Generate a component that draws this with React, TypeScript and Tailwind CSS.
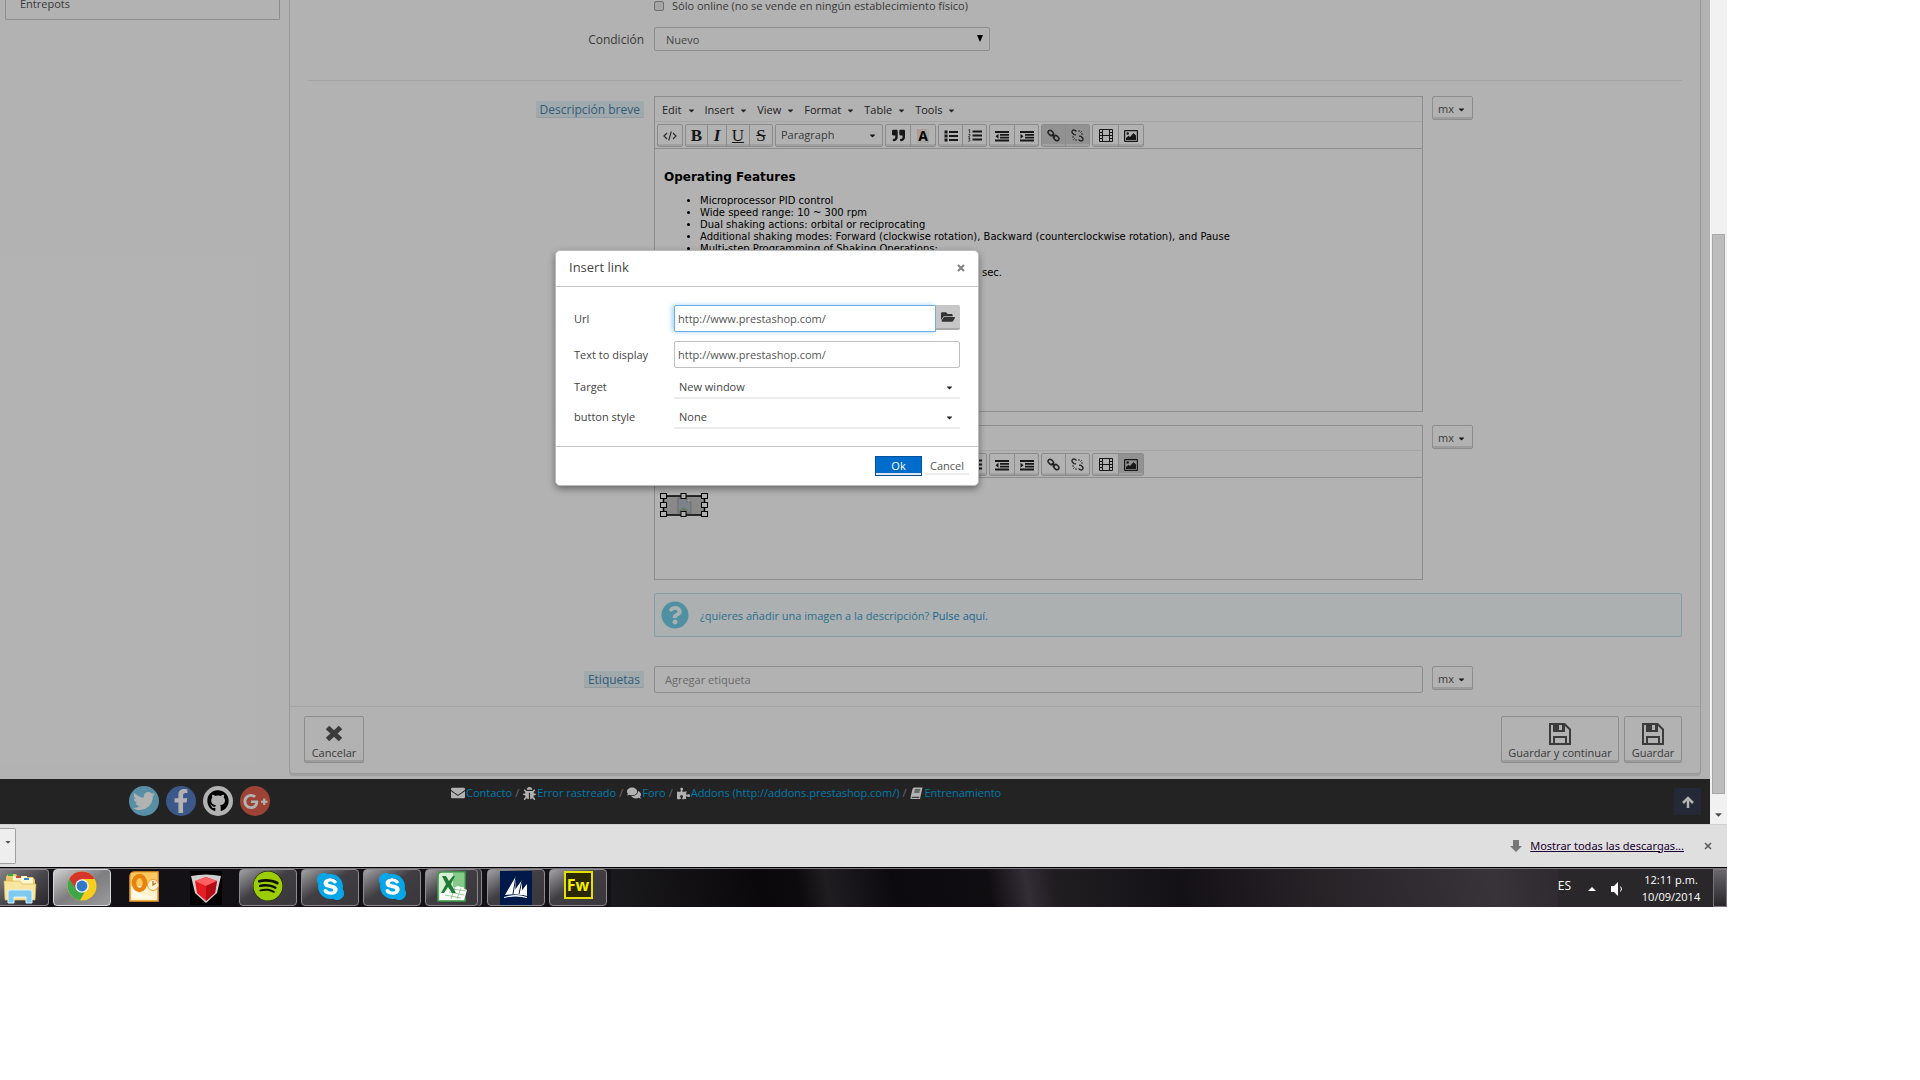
import React from 'react';
import {
  FaBug,
  FaCaretDown,
  FaComments,
  FaEnvelope,
  FaFacebookF,
  FaFolderOpen,
  FaGithub,
  FaGooglePlusG,
  FaPuzzlePiece,
  FaQuestionCircle,
  FaQuoteRight,
  FaSkype,
  FaSpotify,
  FaTwitter
} from 'react-icons/fa';

const menus = ['Edit', 'Insert', 'View', 'Format', 'Table', 'Tools'];

const features = [
  'Microprocessor PID control',
  'Wide speed range: 10 ~ 300 rpm',
  'Dual shaking actions: orbital or reciprocating',
  'Additional shaking modes: Forward (clockwise rotation), Backward (counterclockwise rotation), and Pause',
  'Multi-step Programming of Shaking Operations:'
];

const BookIcon = () => (
  <svg width="13" height="13" viewBox="0 0 13 13">
    <path d="M4 0.500h8.500L10 12H1.500Q0 12 0.500 10.500L2.500 2Q3 0.500 4 0.500z" fill="currentColor" />
    <path d="M4.700 3h5.300M4.200 5h5.300M1.800 10.300h7.500" stroke="#333" />
  </svg>
);

const footerLinks = [
  { label: 'Contacto', icon: <FaEnvelope size={14} /> },
  { label: 'Error rastreado', icon: <FaBug size={13} /> },
  { label: 'Foro', icon: <FaComments size={14} /> },
  { label: 'Addons (http://addons.prestashop.com/)', icon: <FaPuzzlePiece size={13} /> },
  { label: 'Entrenamiento', icon: <BookIcon /> }
];

/* ---------- Toolbar icons ---------- */

const CodeIcon = () => (
  <svg width="14" height="12" viewBox="0 0 14 12" fill="none" stroke="#444" strokeWidth="1.2">
    <path d="M4 3L1 6l3 3M10 3l3 3-3 3M8.3 1.5L5.7 10.5" />
  </svg>
);

const ListIcon = () => (
  <svg width="14" height="12" viewBox="0 0 14 12" fill="#222">
    <path d="M5 1h9v2H5zM5 5h9v2H5zM5 9h9v2H5z" />
    <path d="M0.500 0.500h3v3h-3zM0.500 4.500h3v3h-3zM0.500 8.500h3v3h-3z" />
  </svg>
);

const OrderedIcon = () => (
  <svg width="14" height="13" viewBox="0 0 14 13" fill="#222">
    <path d="M4.500 1.500h9.500v2H4.500zM4.500 5.500h9.500v2H4.500zM4.500 9.500h9.500v2H4.500z" />
    <path d="M0.500 1L1.700 0.500V4M0.400 5.200h1.500v1.200L0.500 8h1.700M0.400 9.300h1.600L1.200 10.600c1.300 0 1.200 1.800-.9 1.600" fill="none" stroke="#222" strokeWidth="0.800" />
  </svg>
);

const OutdentIcon = () => (
  <svg width="14" height="12" viewBox="0 0 14 12" fill="#222">
    <path d="M0 1h14v2H0zM5 4h9v1.800H5zM5 6.800h9v1.800H5zM0 9.500h14v2H0zM3.500 3.700v5L0.500 6.200z" />
  </svg>
);

const IndentIcon = () => (
  <svg width="14" height="12" viewBox="0 0 14 12" fill="#222">
    <path d="M0 1h14v2H0zM5 4h9v1.800H5zM5 6.800h9v1.800H5zM0 9.500h14v2H0zM0.500 3.700v5L3.500 6.200z" />
  </svg>
);

const LinkIcon = () => (
  <svg width="13" height="13" viewBox="0 0 13 13" fill="none" stroke="#333" strokeWidth="1.500">
    <rect x="0.800" y="2" width="6" height="4" rx="2" transform="rotate(45 3.800 4)" />
    <rect x="6.200" y="7" width="6" height="4" rx="2" transform="rotate(45 9.200 9)" />
    <path d="M4.800 5l3.400 3.400" />
  </svg>
);

const UnlinkIcon = () => (
  <svg width="13" height="13" viewBox="0 0 13 13" fill="none" stroke="#333" strokeWidth="1.400">
    <path d="M5.500 2.500L4 1.300C2 .2.2 2.300 1.400 4l1.600 1.700 2 .2M7.500 10.500L9 11.700c2 1.100 3.800-1 2.600-2.700L10 7.300l-2-.2" />
    <path d="M8 1v2M10.800 2.200L9.400 3.600M12 5h-2M1 8h2M2.200 10.800l1.400-1.400M5 10v2" strokeWidth="0.900" />
  </svg>
);

const FilmIcon = () => (
  <svg width="14" height="13" viewBox="0 0 14 13" fill="none" stroke="#222">
    <path d="M0.500 0.500h13v12H0.500zM3.500 0.500v12M10.500 0.500v12M3.500 6.500h7M0.500 3.500h3M0.500 6.500h3M0.500 9.500h3M10.500 3.500h3M10.500 6.500h3M10.500 9.500h3" />
  </svg>
);

const PictureIcon = () => (
  <svg width="14" height="12" viewBox="0 0 14 12">
    <rect x="0.600" y="0.600" width="12.800" height="10.800" rx="0.500" fill="none" stroke="#222" strokeWidth="1.200" />
    <path d="M2 10V8l2.500-2.200L6 7l3.500-4L12 5.500V10z" fill="#222" />
    <circle cx="3.700" cy="3.500" r="1.200" fill="#222" />
  </svg>
);

const SaveIcon = () => (
  <svg width="22" height="22" viewBox="0 0 22 22" fill="none" stroke="#555" strokeWidth="2">
    <path d="M1 1h14.500L21 6.500V21H1z" />
    <path d="M5 21v-7h12v7" />
    <path d="M5 1v7h10V1" />
    <path d="M6 1h4v6H6zM13 1h2v6h-2z" fill="#555" stroke="none" />
  </svg>
);

const CancelIcon = () => (
  <svg width="18" height="22" viewBox="0 0 18 22" stroke="#555" strokeWidth="5" strokeLinejoin="round">
    <path d="M2.500 4.500l13 12M15.500 4.500l-13 12" />
  </svg>
);

/* ---------- Editor ---------- */

const toolBtn =
  'h-[21px] flex items-center border-l border-[#c8c8c8] first:border-l-0 shadow-[inset_0_-2px_0_#e6e6e6] text-[#222]';
const toolGroup = 'flex border border-[#c8c8c8] rounded-xs overflow-hidden h-[23px]';

function Toolbar({ linkActive, imageActive }: { linkActive?: boolean; imageActive?: boolean }) {
  const linkBg = linkActive ? 'bg-[#d2d2d2]' : '';
  return (
    <div className="flex gap-[2px] px-[2px] pt-[2px] h-[27px] border-b border-[#cbcbcb]">
      <div className={toolGroup}>
        <button aria-label="Source code" className={`${toolBtn} justify-center w-6`}><CodeIcon /></button>
      </div>
      <div className={`${toolGroup} font-['Liberation_Serif',serif] text-[17px]`}>
        <button className={`${toolBtn} justify-center w-[21px] font-bold`}>B</button>
        <button className={`${toolBtn} justify-center w-[19px] italic font-bold`}>I</button>
        <button className={`${toolBtn} justify-center w-[23px] underline`}>U</button>
        <button className={`${toolBtn} justify-center w-[23px] line-through`}>S</button>
      </div>
      <div className={toolGroup}>
        <button className={`${toolBtn} w-[106px] justify-between px-[5px] text-[#555]`}>
          Paragraph
          <FaCaretDown size={9} color="#222" />
        </button>
      </div>
      <div className={toolGroup}>
        <button aria-label="Blockquote" className={`${toolBtn} justify-center w-6`}><FaQuoteRight size={13} /></button>
        <button className={`${toolBtn} justify-center w-[25px] font-bold text-sm text-black`}>
          <span className="px-px leading-[14px] bg-linear-to-br from-[#fbd9d9] via-[#f8f4dc] to-[#dbe8fb]">A</span>
        </button>
      </div>
      <div className={toolGroup}>
        <button aria-label="Bullet list" className={`${toolBtn} justify-center w-[23px]`}><ListIcon /></button>
        <button aria-label="Numbered list" className={`${toolBtn} justify-center w-6`}><OrderedIcon /></button>
      </div>
      <div className={toolGroup}>
        <button aria-label="Decrease indent" className={`${toolBtn} justify-center w-6`}><OutdentIcon /></button>
        <button aria-label="Increase indent" className={`${toolBtn} justify-center w-6`}><IndentIcon /></button>
      </div>
      <div className={toolGroup}>
        <button aria-label="Insert link" className={`${toolBtn} ${linkBg} justify-center w-[23px]`}><LinkIcon /></button>
        <button aria-label="Remove link" className={`${toolBtn} ${linkBg} justify-center w-6`}><UnlinkIcon /></button>
      </div>
      <div className={toolGroup}>
        <button aria-label="Insert video" className={`${toolBtn} justify-center w-[25px]`}><FilmIcon /></button>
        <button aria-label="Insert image" className={`${toolBtn} ${imageActive ? 'bg-[#d2d2d2]' : ''} justify-center w-[25px]`}>
          <PictureIcon />
        </button>
      </div>
    </div>
  );
}

function Editor({ children, linkActive, imageActive }: {
  children: React.ReactNode;
  linkActive?: boolean;
  imageActive?: boolean;
}) {
  return (
    <div className="border border-[#cbcbcb]">
      <div className="flex items-center gap-[9px] h-[25px] px-[7px] pt-[2px] border-b border-[#ececec] text-[#333]">
        {menus.map(menu => (
          <button key={menu} className="flex items-center gap-[5px]">
            {menu}
            <FaCaretDown size={9} />
          </button>
        ))}
      </div>
      <Toolbar linkActive={linkActive} imageActive={imageActive} />
      {children}
    </div>
  );
}

function LangButton() {
  return (
    <button className="flex items-center justify-center gap-[3px] w-[41px] h-6 pt-[2px] border border-[#cbcbcb] rounded-xs shadow-[inset_0_-2px_0_#e0e0e0] text-[#555]">
      mx
      <FaCaretDown size={9} color="#222" />
    </button>
  );
}

function FieldLabel({ text, htmlFor }: { text: string; htmlFor?: string }) {
  return (
    <label
      htmlFor={htmlFor}
      className="h-[17px] leading-[17px] px-1 rounded-xs bg-[#e6f2f7] shadow-[inset_0_-1px_0_#cfe0e9] text-xs text-[#4b86ae]"
    >
      {text}
    </label>
  );
}

function SelectedImage() {
  return (
    <svg width="48" height="24" viewBox="0 0 48 24">
      <rect x="3.500" y="3" width="41" height="19" fill="#c4c4c4" stroke="#000" strokeWidth="1.500" />
      <path d="M18 5h9l4 4v11H18z" fill="#b5bcc8" stroke="#999" />
      <path d="M27 5v4h4" fill="#eee" stroke="#999" />
      <path d="M19 19c3-6 6-5 9-2l-3 2z" fill="#8db48d" />
      <g fill="#fff" stroke="#000">
        <rect x="0.500" y="0.500" width="6" height="5" />
        <rect x="21" y="0.500" width="5" height="5" />
        <rect x="41.500" y="0.500" width="6" height="5" />
        <rect x="0.500" y="9.500" width="6" height="5" />
        <rect x="41.500" y="9.500" width="6" height="5" />
        <rect x="0.500" y="18.500" width="6" height="5" />
        <rect x="21" y="18.500" width="5" height="5" />
        <rect x="41.500" y="18.500" width="6" height="5" />
      </g>
    </svg>
  );
}

function ProductForm() {
  return (
    <div className="-mx-[5px]">
      <div className="grid grid-cols-12">
        <div className="col-span-9 col-start-4 px-[5px] h-3 flex items-center">
          <input id="online" type="checkbox" className="appearance-none w-[10px] h-[10px] border border-[#a0a0a0] rounded-xs bg-[#ececec] mr-2" />
          <label htmlFor="online" className="leading-3 text-[#555]">Sólo online (no se vende en ningún establecimiento físico)</label>
        </div>
      </div>

      <div className="grid grid-cols-12 mt-[15px]">
        <label htmlFor="condition" className="col-span-3 px-[5px] text-right text-xs leading-[26px] text-[#555]">Condición</label>
        <div className="col-span-3 px-[5px] relative">
          <select id="condition" className="appearance-none w-full h-6 pl-[11px] pt-[2px] border border-[#cbcbcb] rounded-xs text-[#666]">
            <option>Nuevo</option>
          </select>
          <svg className="absolute right-3 top-2 pointer-events-none" width="6" height="7" viewBox="0 0 6 7">
            <path d="M0 0h6L3 7z" />
          </svg>
        </div>
      </div>

      <hr className="mx-[5px] mt-[27px] mb-[15px] border-[#ececec]" />

      <div className="grid grid-cols-12">
        <div className="col-span-3 px-[5px] pt-[5px] flex justify-end items-start">
          <FieldLabel text="Descripción breve" />
        </div>
        <div className="col-span-9 grid grid-cols-4">
          <div className="col-span-3 px-[5px]">
            <Editor linkActive>
              <div className="h-[262px] px-[9px] pt-[19px] font-['DejaVu_Sans',sans-serif] text-[10px] leading-3 text-black">
                <h3 className="font-bold text-xs leading-[18px]">Operating Features</h3>
                <ul className="list-disc pl-9 pt-[9px]">
                  {features.map(feature => <li key={feature} className="whitespace-nowrap">{feature}</li>)}
                </ul>
                <p className="pl-[318px] pt-3">sec.</p>
              </div>
            </Editor>
          </div>
          <div className="px-1"><LangButton /></div>
        </div>
      </div>

      <div className="grid grid-cols-12 mt-[13px]">
        <div className="col-span-3 px-[5px] pt-[5px] flex justify-end items-start">
          <FieldLabel text="Descripción" />
        </div>
        <div className="col-span-9 grid grid-cols-4">
          <div className="col-span-3 px-[5px]">
            <Editor imageActive>
              <div className="h-[101px] pl-[5px] pt-[15px]"><SelectedImage /></div>
            </Editor>
          </div>
          <div className="px-1"><LangButton /></div>
        </div>
      </div>

      <div className="grid grid-cols-12 mt-[13px]">
        <div className="col-span-9 col-start-4 px-[5px]">
          <div className="flex items-center h-11 pl-[6px] gap-[11px] border border-[#bfe3ec] rounded-xs bg-[#f6fdfe] text-[#3ea3cc]">
            <FaQuestionCircle size={28} color="#72cfe9" />
            <p className="pt-[2px]">¿quieres añadir una imagen a la descripción? <a href="#" className="text-[#2a93d5]">Pulse aquí.</a></p>
          </div>
        </div>
      </div>

      <div className="grid grid-cols-12 mt-[29px]">
        <div className="col-span-3 px-[5px] pt-[5px] flex justify-end items-start">
          <FieldLabel text="Etiquetas" htmlFor="tags" />
        </div>
        <div className="col-span-9 grid grid-cols-4">
          <div className="col-span-3 px-[5px]">
            <input id="tags" type="text" placeholder="Agregar etiqueta" className="block w-full h-[27px] px-[10px] border border-[#cbcbcb] rounded-xs placeholder:text-[#999]" />
          </div>
          <div className="px-1"><LangButton /></div>
        </div>
      </div>
    </div>
  );
}

const actionBtn =
  'flex flex-col items-center justify-end h-[47px] pb-px border border-[#cbcbcb] rounded-xs shadow-[inset_0_-2px_0_#e0e0e0] text-[#555]';

const socialBtn = 'flex items-center justify-center w-[30px] h-[30px] rounded-full text-white';

function PageFooter() {
  return (
    <footer className="flex h-[45px] bg-[#333] pr-[9px]">
      <div className="flex gap-[7px] pl-[129px] pt-[7px] w-[451px]">
        <a href="#" aria-label="Twitter" className={`${socialBtn} bg-[#7fcdee]`}><FaTwitter size={22} /></a>
        <a href="#" aria-label="Facebook" className={`${socialBtn} bg-[#577fc4]`}><FaFacebookF size={24} /></a>
        <a href="#" aria-label="Github" className={`${socialBtn} bg-white`}><FaGithub size={22} color="#000" /></a>
        <a href="#" aria-label="Google" className={`${socialBtn} bg-[#e0604c]`}><FaGooglePlusG size={25} /></a>
      </div>
      <nav className="flex items-center h-4 mt-[6px] text-[#999]">
        {footerLinks.map(({ label, icon }, i) => (
          <span key={label} className="flex items-center">
            <span className="text-white">{icon}</span>
            <a href="#" className="ml-px text-[#00aff0]">{label}</a>
            {i < footerLinks.length - 1 && <span className="ml-[3px] mr-1">/</span>}
          </span>
        ))}
      </nav>
      <button aria-label="Up" className="ml-auto mt-[9px] w-[27px] h-[27px] flex items-center justify-center bg-[#363c50]">
        <svg width="12" height="12" viewBox="0 0 12 12" fill="none" stroke="#fff" strokeWidth="2.500">
          <path d="M6 12V2M1 7l5-5 5 5" />
        </svg>
      </button>
    </footer>
  );
}

/* ---------- Modal ---------- */

const modalInput = 'h-[27px] px-[3px] border text-[#555] outline-none bg-white';

function LinkDialog() {
  return (
    <div role="dialog" aria-label="Insert link" className="absolute left-[555px] top-[250px] w-[424px] bg-white rounded-[5px] border border-[#bbb] shadow-[0_3px_7px_rgba(0,0,0,0.4)] text-[#444]">
      <div className="flex items-center justify-between h-9 px-[13px] pb-px border-b border-[#c5c5c5] text-[13px]">
        Insert link
        <button aria-label="Close" className="text-[#858585]">
          <svg width="8" height="8" viewBox="0 0 8 8" stroke="currentColor" strokeWidth="2.200"><path d="M1 1l6 6M7 1L1 7" /></svg>
        </button>
      </div>
      <div className="grid grid-cols-[100px_1fr] px-[18px] pt-[18px] h-[159px] content-start">
        <label htmlFor="url" className="leading-7">Url</label>
        <div className="flex items-start">
          <input id="url" type="text" defaultValue="http://www.prestashop.com/" className={`${modalInput} grow border-[#66afe9] rounded-l-xs shadow-[-2px_0_5px_#a8d3f5]`} />
          <button aria-label="Browse" className="w-6 h-[25px] flex items-center justify-center bg-[#c7c7c7] border-b-2 border-[#a9a9a9] rounded-r-xs text-[#333]">
            <FaFolderOpen size={14} />
          </button>
        </div>
        <label htmlFor="text" className="mt-2 leading-7">Text to display</label>
        <input id="text" type="text" defaultValue="http://www.prestashop.com/" className={`${modalInput} mt-2 border-[#c0c0c0] rounded-xs`} />
        <label htmlFor="target" className="mt-[6px] leading-6">Target</label>
        <DialogSelect id="target" value="New window" />
        <label htmlFor="style" className="mt-[6px] leading-6">button style</label>
        <DialogSelect id="style" value="None" />
      </div>
      <div className="flex justify-end items-start gap-[3px] h-[39px] pt-[9px] pr-[9px] border-t border-[#c5c5c5]">
        <button className="w-[47px] h-5 bg-[#006dcc] border border-[#00529b] text-white text-center leading-[18px] shadow-[inset_0_-2px_0_#e6e6e6]">Ok</button>
        <button className="w-11 h-[19px] text-[#555] leading-5 shadow-[inset_0_-2px_0_#ececec]">Cancel</button>
      </div>
    </div>
  );
}

function DialogSelect({ id, value }: { id: string; value: string }) {
  return (
    <div className="relative mt-[6px]">
      <select id={id} className="appearance-none w-full h-6 pl-[5px] pt-[3px] border-b-2 border-[#ececec] text-[#444]">
        <option>{value}</option>
      </select>
      <FaCaretDown size={9} color="#222" className="absolute right-[6px] top-2 pointer-events-none" />
    </div>
  );
}

/* ---------- Windows taskbar ---------- */

const ExplorerIcon = () => (
  <svg width="34" height="32" viewBox="0 0 34 32">
    <path d="M3 5l2-3h8l2 3h15l2 3v20H2z" fill="#e9c867" />
    <path d="M10 4h14v6H10zM18 6h12v6H18z" fill="#fff6d0" />
    <path d="M5 2h5v2H5z" fill="#2faf3d" />
    <path d="M13 4h5v2h-5z" fill="#d24332" />
    <path d="M21 6h5v2h-5z" fill="#2d8ad8" />
    <path d="M1 9h16l2 3h14l-1 16H2z" fill="#f8e6a0" stroke="#d8b24c" strokeWidth="0.700" />
    <path d="M5 20q0-2 2-2h20q2 0 2 2v11h-6v-6H11v6H5z" fill="#7ec9ee" stroke="#d8f2ff" />
  </svg>
);

const ChromeIcon = () => (
  <svg width="30" height="30" viewBox="0 0 30 30">
    <circle cx="15" cy="15" r="14.500" fill="#f8ce1c" />
    <path d="M15 15L2.400 7.800A14.500 14.500 0 0 0 13 29.300l6-10.500z" fill="#3fa64b" />
    <path d="M15 8h12.700A14.500 14.500 0 0 0 2.400 7.800L9 18z" fill="#d8352a" />
    <circle cx="15" cy="15" r="6.800" fill="#f3f3f3" />
    <circle cx="15" cy="15" r="5.400" fill="#2f78c4" />
  </svg>
);

const OutlookIcon = () => (
  <svg width="30" height="32" viewBox="0 0 30 32">
    <path d="M6 1h23v29H1V6q0-5 5-5z" fill="#fff3cf" stroke="#ee9a20" strokeWidth="1.500" />
    <path d="M2 2h26v13H2z" fill="#fbc95f" />
    <path d="M3 20l24 7H3z" fill="#fffbe9" />
    <ellipse cx="10.500" cy="12" rx="5.500" ry="7" fill="none" stroke="#e7820e" strokeWidth="4.500" />
    <circle cx="24" cy="14" r="5.500" fill="#fff4cf" stroke="#e89b35" />
    <path d="M24 10v4l3-2" fill="none" stroke="#b3752c" strokeWidth="1.300" />
  </svg>
);

const ShieldIcon = () => (
  <svg width="32" height="34" viewBox="0 0 32 34">
    <path d="M0 0h32v34H0z" fill="#000" />
    <path d="M1 5q15-3 30 0l-4 17-11 10L5 22z" fill="#cfcfcf" />
    <path d="M5 10l11-4 11 4-2 12-9 8-9-8z" fill="#e81b23" />
    <path d="M5 10l11-4 11 4-11 5z" fill="#ff6060" />
    <path d="M16 15l11-5-2 12-9 8z" fill="#b40d15" />
  </svg>
);

const SpotifyIcon = () => (
  <span className="flex items-center justify-center w-[30px] h-[30px] rounded-full bg-[#0d1200]">
    <FaSpotify size={30} color="#9ccc04" />
  </span>
);

const SkypeIcon = () => (
  <span className="relative flex items-center justify-center">
    <span className="absolute w-[18px] h-[18px] rounded-full bg-white" />
    <FaSkype size={31} color="#06a7e8" className="relative" />
  </span>
);

const ExcelIcon = () => (
  <svg width="30" height="32" viewBox="0 0 30 32">
    <path d="M5 1h23v29H1V5q0-4 4-4z" fill="#d9efd5" stroke="#3a9a48" strokeWidth="1.500" />
    <path d="M16 2h11v14H16z" fill="#86ca8a" />
    <path d="M3 22l18-7 9 4-3 10H3z" fill="#fff" />
    <path d="M15 18l14 2M12 21l15 3M8 24l16 3M18 16l-4 12M24 17l-4 11" stroke="#85bd85" strokeWidth="0.800" />
    <path d="M5 5h4l3 5 4-5h2l-4 8 5 9h-4l-4-6-4 6H4l5-9z" fill="#207b36" />
  </svg>
);

const DynamicsIcon = () => (
  <svg width="32" height="34" viewBox="0 0 32 34">
    <path d="M0 0h32v34H0z" fill="#00194b" />
    <path d="M5 24L16 5l-1 18zM12 23l10-14v15zM19 23l8-10v12z" fill="#fff" />
    <path d="M4 26q12-4 23 0v1q-11-3-23 0z" fill="#fff" />
    <path d="M16 5l-3 18M22 9l-3 14" stroke="#00194b" />
  </svg>
);

const FireworksIcon = () => (
  <span className="w-[29px] h-[28px] border-2 border-[#e2e100] bg-[#2b2700] text-[#f1ee00] text-base leading-6 font-bold text-center">
    Fw
  </span>
);

const tasks = [
  { name: 'Chrome', icon: <ChromeIcon />, state: 'active' },
  { name: 'Outlook', icon: <OutlookIcon />, state: 'pinned' },
  { name: 'Security', icon: <ShieldIcon />, state: 'pinned' },
  { name: 'Spotify', icon: <SpotifyIcon />, state: 'open' },
  { name: 'Skype', icon: <SkypeIcon />, state: 'open' },
  { name: 'Skype chat', icon: <SkypeIcon />, state: 'open' },
  { name: 'Excel', icon: <ExcelIcon />, state: 'stacked' },
  { name: 'Dynamics', icon: <DynamicsIcon />, state: 'open' },
  { name: 'Fireworks', icon: <FireworksIcon />, state: 'open' }
];

const openTask = 'border-[#8d8b8f] bg-linear-to-br from-[#a3a2a5] via-[#403e42] via-45% to-[#39373b]';

const taskState: Record<string, string> = {
  active: 'w-[58px] border-[#d8d8d8] bg-linear-to-br from-[#d0d0d0] via-[#7e7e80] to-[#9b9b9d]',
  open: `${openTask} w-[58px]`,
  stacked: `${openTask} w-[53px] mr-[5px] shadow-[3px_0_0_#39373b,4px_0_0_#8d8b8f]`,
  pinned: 'w-[58px] border-transparent'
};

function Taskbar() {
  return (
    <div className="flex h-10 border-t border-black bg-[#141116] text-white">
      <div className="flex grow gap-1 border-t border-[#77747a] pb-px">
        <button aria-label="Explorer" className="w-[49px] flex items-center pl-[3px] border border-l-0 rounded-r-sm border-[#8d8b8f] bg-linear-to-br from-[#858386] via-[#4a484c] to-[#29272b]">
          <ExplorerIcon />
        </button>
        {tasks.map(task => (
          <button
            key={task.name}
            aria-label={task.name}
            className={`flex items-start justify-center pt-px border rounded-sm ${taskState[task.state]}`}
          >
            {task.icon}
          </button>
        ))}
        <div className="grow -mb-px bg-[linear-gradient(80deg,#1a191b_0%,#0a080b_16%,#0c0a0d_20%,#1f1d20_23%,#0c0a0e_30%,#100d11_40%,#332d36_44%,#1f1d20_47%,#1c1a1d_51%,#141116_60%,#272327_75%,#373338_93%,#2e2a2f_100%)]" />
      </div>
      <div className="flex items-center border-t border-[#77747a] bg-[#2a272b] text-[11px]">
        <span className="mb-1 text-xs">ES</span>
        <svg className="ml-[17px] mt-[2px]" width="8" height="4" viewBox="0 0 8 4" fill="#fff"><path d="M0 4l4-4 4 4z" /></svg>
        <svg className="ml-[15px] mt-[2px]" width="13" height="14" viewBox="0 0 13 14" fill="#fff">
          <path d="M0 4h3l4-4v14l-4-4H0z" />
          <path d="M9.500 4.500q2 2.500 0 5" fill="none" stroke="#fff" />
        </svg>
        <div className="ml-[17px] w-[60px] text-center leading-[17px]">
          12:11 p.m.<br />10/09/2014
        </div>
        <button aria-label="Show desktop" className="ml-3 w-[14px] h-full border border-[#77747a] bg-linear-to-b from-[#6a686c] to-[#29272a]" />
      </div>
    </div>
  );
}

function DownloadBar() {
  return (
    <div className="flex items-center h-[43px] pr-[15px] bg-[#dfdfdf] border-t border-[#d0d0d0] font-['Noto_Sans',sans-serif]">
      <button aria-label="Download options" className="w-4 h-[36px] flex items-center justify-center border border-l-0 border-[#a0a0a0] rounded-r-xs bg-[#eee] pb-2">
        <FaCaretDown size={8} color="#555" />
      </button>
      <svg className="ml-auto" width="12" height="12" viewBox="0 0 12 12" fill="#777"><path d="M3 0h6v6h3l-6 6-6-6h3z" /></svg>
      <a href="#" className="ml-2 underline text-[#1a0030]">Mostrar todas las descargas...</a>
      <button aria-label="Close" className="ml-5">
        <svg width="8" height="8" viewBox="0 0 8 8" stroke="#555" strokeWidth="1.500"><path d="M1 1l6 6M7 1L1 7" /></svg>
      </button>
    </div>
  );
}

export default function App() {
  return (
    <div className="bg-white min-h-screen pr-[193px] font-['Open_Sans',sans-serif] text-[11px]">
      <div className="flex">
        <div className="relative grow min-w-0">
          <div className="grid grid-cols-[1fr_5fr]">
            {/* Sidebar */}
            <aside className="px-[5px]">
              <div className="h-5 border border-t-0 border-[#cbcbcb] rounded-b-xs pl-[14px] leading-[8px] text-[#555]">Entrepots</div>
            </aside>
            {/* Product panel */}
            <main className="pl-1 pr-[9px] pb-[5px]">
              <div className="border-x border-b border-[#dcdcdc] rounded-b-sm shadow-[0_2px_0_#e6e6e6]">
                <div className="px-[18px] pb-[13px]"><ProductForm /></div>
                <div className="flex gap-[5px] px-[14px] pr-[18px] pt-[9px] pb-[10px] border-t border-[#ececec]">
                  <button className={`${actionBtn} w-[60px]`}><CancelIcon />Cancelar</button>
                  <button className={`${actionBtn} w-[118px] ml-auto`}><SaveIcon />Guardar y continuar</button>
                  <button className={`${actionBtn} w-[58px]`}><SaveIcon />Guardar</button>
                </div>
              </div>
            </main>
          </div>
          <PageFooter />
          <div className="absolute inset-0 bg-black/30" />
          <LinkDialog />
        </div>
        {/* Scrollbar */}
        <div className="w-[17px] flex flex-col items-center pt-[234px] bg-[#f1f1f1]">
          <div className="w-[13px] grow border border-[#a8a8a8] bg-[#bcbcbc]" />
          <div className="h-[30px] pt-[15px]"><FaCaretDown size={11} color="#505050" /></div>
        </div>
      </div>
      <DownloadBar />
      <Taskbar />
    </div>
  );
}
